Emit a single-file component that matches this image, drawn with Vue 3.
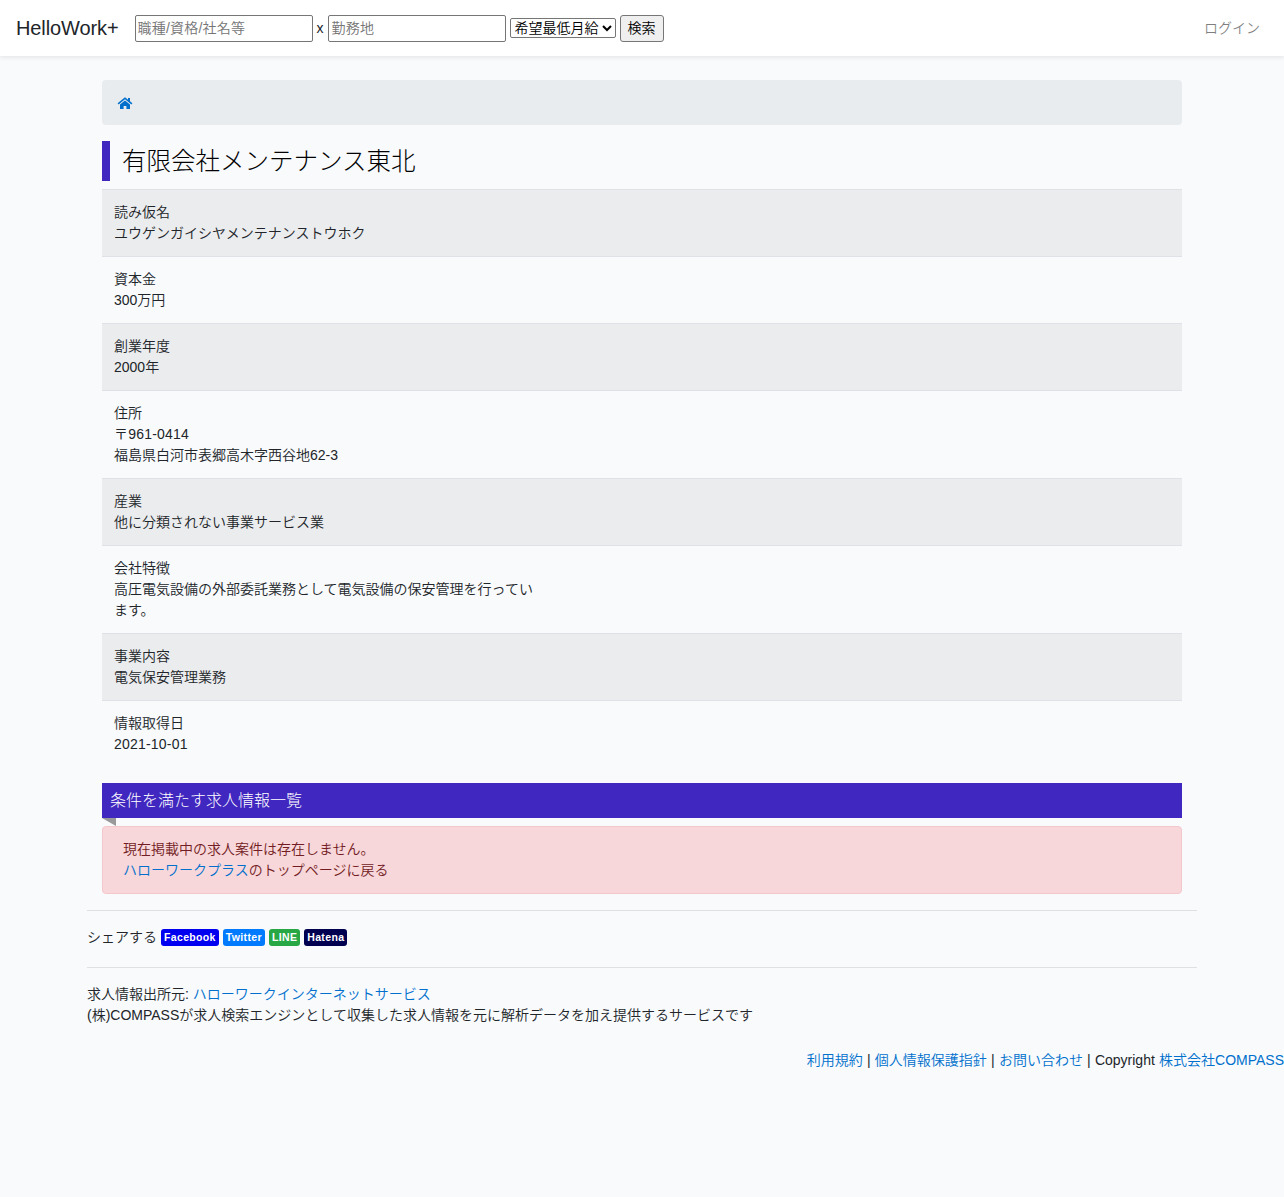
<template>
  <div class="page">
    <nav class="nav">
      <a class="brand">HelloWork+</a>
      <form class="search" @submit.prevent>
        <input class="job" placeholder="職種/資格/社名等" />
        <span class="x">x</span>
        <input class="loc" placeholder="勤務地" />
        <select class="sel"><option>希望最低月給</option></select>
        <button class="btn">検索</button>
      </form>
      <a class="login">ログイン</a>
    </nav>
    <main class="container">
      <div class="crumb">
        <svg class="home" viewBox="0 0 16 16" width="16" height="16"><path fill="#0070cc" d="M8 2.2.6 8.3l1 1.2L8 4.3l6.4 5.2 1-1.2-2.4-2V3h-2v1.7L8 2.2zM8 5.4 3 9.5V14h3.6v-3h2.8v3H13V9.5L8 5.4z"/></svg>
      </div>
      <h1 class="title">有限会社メンテナンス東北</h1>
      <div v-for="(r, i) in rows" :key="r.label" class="row" :class="{ odd: i % 2 === 0 }">
        <div>{{ r.label }}</div>
        <div class="val" :class="{ num: l.includes('-') && l.length < 12 }" v-for="l in r.lines" :key="l">{{ l }}</div>
      </div>
      <h2 class="ribbon">条件を満たす求人情報一覧</h2>
      <div class="alert">
        現在掲載中の求人案件は存在しません。<br />
        <a class="link">ハローワークプラス</a>のトップページに戻る
      </div>
    </main>
    <footer class="foot">
      <hr class="rule" />
      <div class="share">
        <span>シェアする</span>
        <span class="badge fb">Facebook</span>
        <span class="badge tw">Twitter</span>
        <span class="badge ln">LINE</span>
        <span class="badge hb">Hatena</span>
      </div>
      <hr class="rule" />
      <div class="source">
        求人情報出所元: <a class="link">ハローワークインターネットサービス</a><br />
        (株)COMPASSが求人検索エンジンとして収集した求人情報を元に解析データを加え提供するサービスです
      </div>
    </footer>
    <div class="copy">
      <a class="link">利用規約</a> | <a class="link">個人情報保護指針</a> | <a class="link">お問い合わせ</a> | Copyright <a class="link">株式会社COMPASS</a>
    </div>
  </div>
</template>

<script setup>
const rows = [
  { label: '読み仮名', lines: ['ユウゲンガイシヤメンテナンストウホク'] },
  { label: '資本金', lines: ['300万円'] },
  { label: '創業年度', lines: ['2000年'] },
  { label: '住所', lines: ['〒961-0414', '福島県白河市表郷高木字西谷地62-3'] },
  { label: '産業', lines: ['他に分類されない事業サービス業'] },
  { label: '会社特徴', lines: ['高圧電気設備の外部委託業務として電気設備の保安管理を行ってい', 'ます。'] },
  { label: '事業内容', lines: ['電気保安管理業務'] },
  { label: '情報取得日', lines: ['2021-10-01'] },
]
</script>

<style>
html, body { margin: 0; background: #f8fafc; }
</style>

<style scoped>
.page {
  min-height: 1197px;
  background: #f8fafc;
  color: #212529;
  font: 350 14px/21px "Liberation Sans", "Noto Sans CJK JP", sans-serif;
  overflow-x: hidden;
}
.nav {
  height: 56px;
  background: #fff;
  box-shadow: 0 2px 4px rgba(0, 0, 0, .075);
  display: flex;
  align-items: center;
  padding: 0 24px 0 16px;
  box-sizing: border-box;
}
.brand { font-size: 20px; line-height: 30px; margin-right: 16px; color: #212529; letter-spacing: -.1px; }
.search { display: flex; align-items: center; gap: 4px; }
input {
  height: 27px;
  box-sizing: border-box;
  border: 1px solid #767676;
  border-radius: 2px;
  padding: 1px 2px;
  font: 350 14px "Liberation Sans", "Noto Sans CJK JP", sans-serif;
  background: #fff;
}
input::placeholder { color: #757575; letter-spacing: .2px; }
.job { width: 178px; }
.loc { width: 178px; padding-left: 3px; }
.sel {
  width: 106px;
  height: 20px;
  padding-bottom: 2px;
  font: 350 14px "Liberation Sans", "Noto Sans CJK JP", sans-serif;
  background: #fff;
  color: #000;
  border: 1px solid #767676;
  border-radius: 2px;
}
.btn {
  height: 27px;
  padding: 0 7px 2px;
  font: 350 14px "Liberation Sans", "Noto Sans CJK JP", sans-serif;
  background: #efefef;
  border: 1px solid #767676;
  border-radius: 3px;
  color: #000;
}
.login { margin-left: auto; color: rgba(0, 0, 0, .5); }
.container { width: 1080px; margin: 24px auto 0; }
.crumb {
  height: 45px;
  background: #e9ecef;
  border-radius: 4px;
  padding: 0 15px;
  display: flex;
  align-items: center;
  margin-bottom: 16px;
}
.title {
  margin: 0 0 8px;
  height: 40px;
  border-left: 8px solid #4027c0;
  padding-left: 12px;
  font-size: 24.5px;
  line-height: 41px;
  font-weight: 300;
  color: #000;
}
.row { border-top: 1px solid #dee2e6; padding: 12px; }
.odd { background: #ebecee; }
.val { max-width: 432px; }
.num { letter-spacing: .2px; }
.ribbon {
  position: relative;
  margin: 16px 0 8px;
  height: 35px;
  background: #4027c0;
  color: #fff;
  font-size: 16px;
  line-height: 36px;
  font-weight: 300;
  padding-left: 8px;
}
.ribbon::after {
  content: "";
  position: absolute;
  left: 0;
  top: 100%;
  border-top: 8px solid #999;
  border-left: 14px solid transparent;
}
.alert {
  background: #f8d7da;
  border: 1px solid #f5c6cb;
  border-radius: 4px;
  color: #721c24;
  padding: 12px 20px;
}
.link { color: #0070cc; }
.foot { width: 1110px; margin: 16px auto 0; }
.rule { border: 0; border-top: 1px solid rgba(0, 0, 0, .1); margin: 0; }
.share { padding: 16px 0 19px; display: flex; align-items: center; gap: 4px; }
.badge {
  font-size: 10.5px;
  font-weight: 700;
  line-height: 10.5px;
  letter-spacing: .35px;
  color: #fff;
  padding: 3px;
  border-radius: 3px;
}
.fb { background: #0000f0; }
.tw { background: #007bff; }
.ln { background: #28a745; }
.hb { background: #000050; }
.source { margin-top: 16px; }
.copy { margin-top: 24px; text-align: right; white-space: nowrap; word-spacing: .3px; }
</style>
